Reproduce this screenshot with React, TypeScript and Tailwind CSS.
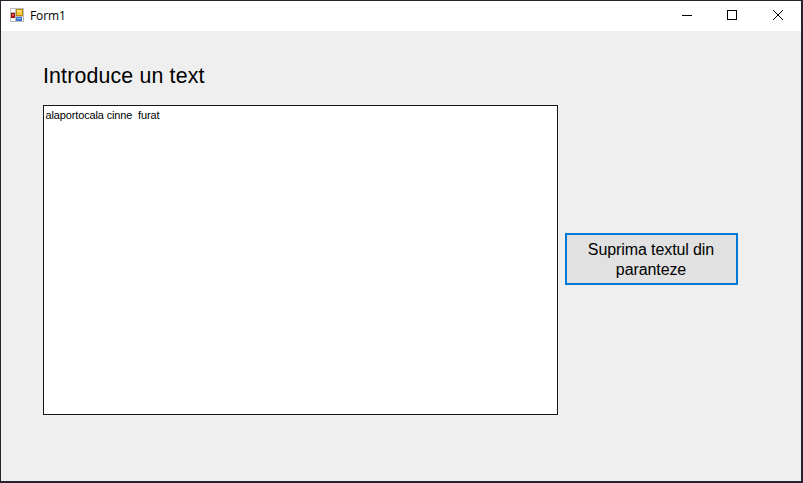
function FormIcon() {
  return (
    <svg width="14" height="14" viewBox="0 0 14 14" shapeRendering="crispEdges" aria-hidden="true">
      <rect x="0" y="0" width="14" height="14" fill="#bdbdbd" />
      <rect x="1" y="1" width="4" height="3" fill="#fff" />
      <rect x="1" y="10" width="4" height="3" fill="#fff" />
      <rect x="12" y="9" width="1" height="4" fill="#fff" />
      <rect x="1" y="5" width="4" height="5" fill="#9c1010" />
      <rect x="2" y="6" width="2" height="2" fill="#d8584a" />
      <rect x="6" y="1" width="7" height="7" fill="#b98a10" />
      <rect x="7" y="2" width="5" height="5" fill="#f6c93a" />
      <rect x="7" y="2" width="4" height="2" fill="#fde07c" />
      <rect x="6" y="9" width="6" height="4" fill="#3c78d0" />
      <rect x="7" y="10" width="4" height="1" fill="#84b4f4" />
    </svg>
  );
}

function TitleBar() {
  return (
    <header className="flex h-[30px] shrink-0 items-center bg-white pb-[2px] pl-[9px]">
      <FormIcon />
      <span className="ml-[6px] pt-[2px] font-['Open_Sans','Noto_Sans',sans-serif] text-[12px] leading-4 tracking-[-0.1px]">
        Form1
      </span>
      <div className="ml-auto flex h-full">
        <button aria-label="Minimize" className="flex w-[45px] items-center justify-center">
          <svg width="10" height="10" shapeRendering="crispEdges">
            <rect y="5" width="10" height="1" />
          </svg>
        </button>
        <button aria-label="Maximize" className="flex w-[46px] items-center justify-center">
          <svg width="10" height="10" shapeRendering="crispEdges">
            <rect x=".5" y=".5" width="9" height="9" fill="none" stroke="#000" />
          </svg>
        </button>
        <button aria-label="Close" className="flex w-[46px] items-center justify-center">
          <svg width="10" height="10" stroke="#000">
            <path d="M0 0 10 10M10 0 0 10" />
          </svg>
        </button>
      </div>
    </header>
  );
}

export default function App() {
  return (
    <div className="flex h-[483px] w-[803px] flex-col overflow-hidden border-t border-r-2 border-b-2 border-l border-[#25232b] bg-[#efefef] font-['Liberation_Sans',Arial,sans-serif] text-black">
      <TitleBar />
      <main className="flex flex-col pt-[31px] pl-[42px]">
        <label className="h-[43px] text-[21.33px] leading-7 tracking-[0.16px] whitespace-nowrap">
          Introduce un text
        </label>
        <div className="flex items-start gap-[7px]">
          <div className="h-[310px] w-[515px] border border-[#151515] bg-white pt-[3px] pl-[1.5px] text-[11px] leading-[13px] tracking-[-0.14px] whitespace-pre">
            alaportocala cinne  furat
          </div>
          <button className="mt-[128px] flex h-[52px] w-[173px] items-center justify-center border-2 border-[#0078d7] bg-[#e1e1e1] pt-[2px] pr-px text-center text-[16px] leading-5 tracking-[-0.1px]">
            <span>
              Suprima textul din
              <br />
              paranteze
            </span>
          </button>
        </div>
      </main>
    </div>
  );
}
